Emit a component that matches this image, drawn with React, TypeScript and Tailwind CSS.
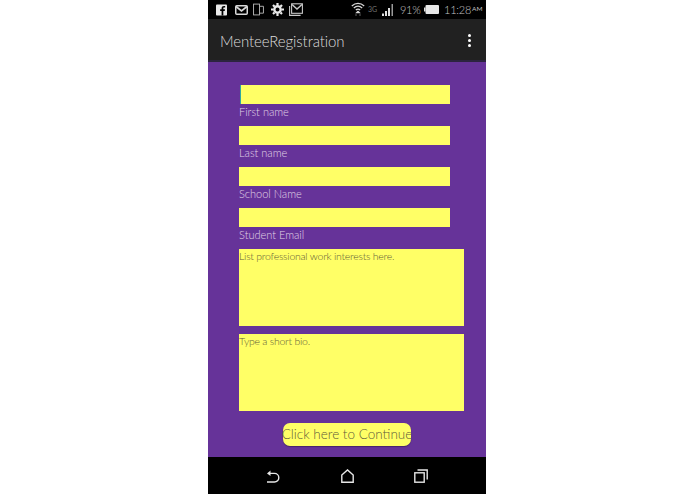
function StatusBar() {
  return (
    <div className="flex h-[19px] shrink-0 items-center justify-between bg-black pl-[8px] pr-[3px]">
      <div className="flex items-center">
        {/* facebook */}
        <svg width="11" height="12" viewBox="0 0 12 12">
          <rect width="12" height="12" rx="1" fill="#e8e8e8" />
          <path d="M8 12V7.2h1.5L9.8 5.3H8V4.2c0-.6.2-1 1-1h1V1.6C9.700 1.500 9.200 1.500 8.700 1.500 7.200 1.500 6.100 2.400 6.100 4v1.300H4.500v1.900h1.600V12z" fill="#000" />
        </svg>
        {/* gmail */}
        <svg className="ml-[8px]" width="13" height="10" viewBox="0 0 13 10" fill="none" stroke="#d8d8d8">
          <rect x="0.750" y="0.750" width="11.500" height="8.500" rx="1" strokeWidth="1.500" />
          <path d="M1 1.500l5.500 4.500L12 1.500" strokeWidth="1.700" />
        </svg>
        {/* phone pair */}
        <svg className="ml-[5px]" width="11" height="13" viewBox="0 0 12 13" fill="none" stroke="#b8b8b8" strokeWidth="1">
          <rect x="0.600" y="0.600" width="6.500" height="11.800" />
          <path d="M7.100 3h4.300v7.500H7.100" />
        </svg>
        {/* gear */}
        <svg className="ml-[7px]" width="13" height="13" viewBox="0 0 13 13">
          <circle cx="6.500" cy="6.500" r="3.200" fill="none" stroke="#e8e8e8" strokeWidth="2.400" />
          <path d="M6.500 0v13M0 6.500h13M2 2l9 9M11 2l-9 9" stroke="#e8e8e8" strokeWidth="2.200" strokeDasharray="2.400 8.200 2.400" />
        </svg>
        {/* stacked mail */}
        <svg className="ml-[5px]" width="14" height="13" viewBox="0 0 14 13" fill="none" stroke="#c8c8c8" strokeWidth="1.100">
          <path d="M.6 3v9.400h11" />
          <rect x="2.600" y="0.800" width="10.800" height="9.500" />
          <path d="M3 1.500l5 4.500 5-4.500" strokeWidth="1.500" />
        </svg>
      </div>
      <div className="flex items-center font-['Lato'] text-[#c4c4c4]">
        {/* wifi */}
        <svg width="14" height="15" viewBox="0 0 14 15" fill="none" stroke="#d8d8d8" strokeWidth="1.300">
          <path d="M.8 4C4.500.6 9.500.6 13.200 4M2.800 6c2.500-2.200 5.900-2.200 8.400 0M4.800 8c1.300-1 3.100-1 4.400 0" />
          <path d="M7 9.500l1 1H6zM4.700 13h.6M8.700 13h.6" strokeWidth="1.500" />
        </svg>
        <span className="ml-[3px] w-[10px] text-[7px] leading-none text-[#707070]">3G</span>
        {/* signal */}
        <svg className="ml-[4px]" width="13" height="12" viewBox="0 0 13 12" fill="#e0e0e0">
          <rect x="0" y="9.500" width="2" height="2.500" />
          <rect x="3" y="7" width="2" height="5" />
          <rect x="6" y="4" width="2" height="8" />
          <rect x="9.500" y="0" width="1.500" height="12" fill="#9a9a9a" />
        </svg>
        <span className="ml-[5px] w-[20px] whitespace-nowrap text-[11px] font-light leading-none tracking-[-0.3px]">91%</span>
        {/* battery */}
        <svg className="ml-[4px]" width="15" height="9" viewBox="0 0 15 9">
          <rect x="0" y="2.500" width="1.500" height="4" fill="#e0e0e0" />
          <rect x="1.500" y="0" width="13.500" height="9" rx="1" fill="#e8e8e8" />
        </svg>
        <span className="ml-[5px] w-[27px] whitespace-nowrap text-[11px] font-light leading-none tracking-[-0.2px]">11:28</span>
        <span className="ml-[1px] w-[11px] text-[6.500px] leading-none">AM</span>
      </div>
    </div>
  );
}

function AppBar() {
  return (
    <div className="flex h-[43px] shrink-0 items-center justify-between border-b-[2px] border-b-[#2c2440] bg-[#212121] pl-[12px] pr-[15px] pt-[2px]">
      <span className="pt-[1px] font-['Lato'] text-[15px] font-light tracking-[-0.1px] text-[#dcdcdc]">MenteeRegistration</span>
      <div className="flex flex-col gap-[2px]">
        <div className="h-[3px] w-[3px] rounded-full bg-white" />
        <div className="h-[3px] w-[3px] rounded-full bg-white" />
        <div className="h-[3px] w-[3px] rounded-full bg-white" />
      </div>
    </div>
  );
}

function Field({ label, focused }: { label: string; focused?: boolean }) {
  return (
    <div className="h-[41px] w-[211px]">
      <div className={`h-[19px] bg-[#ffff66] ${focused ? "ml-[1px] border-l border-l-[#2fa7a0]" : ""}`} />
      <div className="font-['Lato'] text-[11px] font-light leading-[15px] text-[#e0d4e6]">{label}</div>
    </div>
  );
}

function Area({ text }: { text: string }) {
  return (
    <div className="h-[77px] w-[225px] bg-[#ffff66] font-['Lato'] text-[10.500px] font-light leading-[15px] tracking-[-0.25px] text-[#5f5c3a]">
      {text}
    </div>
  );
}

function NavBar() {
  return (
    <div className="flex h-[37px] shrink-0 items-center justify-between bg-black px-[58px]">
      {/* back */}
      <svg width="14" height="14" viewBox="0 0 14 14" fill="none" stroke="#e6e6e6" strokeWidth="1.400">
        <path d="M1 13h7.500a4.300 4.300 0 0 0 0-8.600H2" />
        <path d="M4.500 1.500L1 4.400l3.500 2.600" fill="#e6e6e6" stroke="none" />
      </svg>
      {/* home */}
      <svg width="13" height="14" viewBox="0 0 13 14" fill="none" stroke="#e6e6e6" strokeWidth="1.400">
        <path d="M.8 13.200V6L6.500.9 12.200 6v7.200z" />
      </svg>
      {/* recents */}
      <svg width="14" height="14" viewBox="0 0 14 14" fill="none" stroke="#e6e6e6" strokeWidth="1.400">
        <rect x="0.800" y="3.800" width="9.400" height="9.400" />
        <path d="M3.500 1h9.700v9.500" />
      </svg>
    </div>
  );
}

export default function App() {
  return (
    <div className="h-[494px] w-[695px] bg-white pl-[208px]">
      <div className="flex h-full w-[278px] flex-col">
        <StatusBar />
        <AppBar />
        <div className="flex flex-1 flex-col bg-[#663399] pl-[31px] pt-[23px]">
          <Field label="First name" focused />
          <Field label="Last name" />
          <Field label="School Name" />
          <Field label="Student Email" />
          <Area text="List professional work interests here." />
          <div className="mt-[8px]">
            <Area text="Type a short bio." />
          </div>
          <div className="ml-[44px] mt-[12px] flex h-[23px] w-[128px] items-center justify-center whitespace-nowrap rounded-[7px] bg-[#ffff66] font-['Lato'] text-[13.500px] font-light text-[#5f5c3a] shadow-[0_1px_1px_rgba(0,0,0,0.3)]">
            Click here to Continue
          </div>
        </div>
        <NavBar />
      </div>
    </div>
  );
}
